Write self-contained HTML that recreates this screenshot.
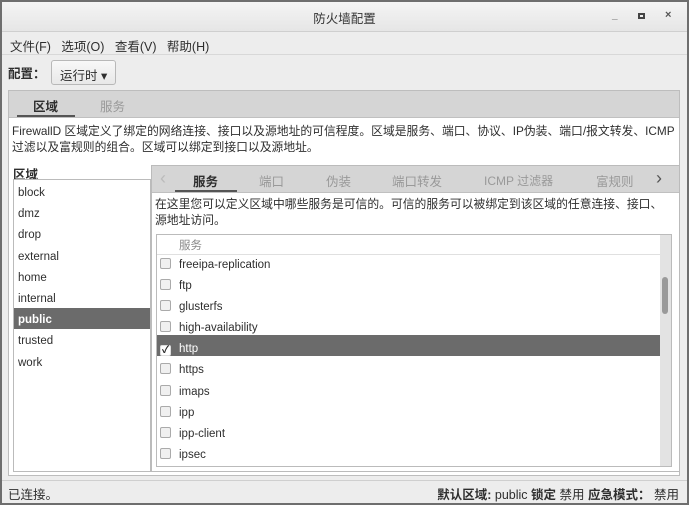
<!DOCTYPE html>
<html><head><meta charset="utf-8"><style>
*{margin:0;padding:0;box-sizing:border-box}
body{width:689px;height:505px;overflow:hidden;background:#fff;font-family:"Liberation Sans","Noto Sans CJK SC",sans-serif;font-size:11px;color:#2e2e2e;position:relative}
.a{position:absolute;white-space:nowrap}
#win{position:absolute;left:0;top:0;width:689px;height:505px;border:2px solid #6e6e6e;background:#ededed}
.cb{display:inline-block;width:11px;height:11px;border:1px solid #aaa;border-radius:2px;background:#f0f0f0;vertical-align:-1px;margin-right:8px}
</style></head><body>
<div id="win"></div>
<div class="a" style="left:2px;top:2px;width:685px;height:30px;background:linear-gradient(#f4f4f4,#e6e6e6);border-bottom:1px solid #cfcfcf"></div>
<div class="a" style="left:0;width:689px;top:8px;text-align:center;font-size:12.5px;color:#333">防火墙配置</div>
<div class="a" style="left:612px;top:10px;font-size:10px;font-weight:bold;color:#555">_</div>
<div class="a" style="left:638px;top:13px;width:7px;height:6px;border:2px solid #444"></div>
<div class="a" style="left:665px;top:9px;font-size:11px;font-weight:bold;color:#555">×</div>
<div class="a" style="left:10px;top:36px;font-size:12.5px">文件(F)&nbsp;&nbsp; 选项(O)&nbsp;&nbsp; 查看(V)&nbsp;&nbsp; 帮助(H)</div>
<div class="a" style="left:2px;top:54px;width:685px;height:1px;background:#d8d8d8"></div>
<div class="a" style="left:8px;top:63px;font-weight:bold;font-size:12.5px">配置：</div>
<div class="a" style="left:51px;top:60px;width:65px;height:25px;border:1px solid #b8b8b8;border-radius:3px;background:linear-gradient(#f8f8f8,#e8e8e8);padding:4px 0 0 8px;font-size:12.5px">运行时 ▾</div>
<div class="a" style="left:8px;top:90px;width:672px;height:386px;border:1px solid #bdbdbd;background:#fff"></div>
<div class="a" style="left:9px;top:91px;width:670px;height:27px;background:#d5d5d5;border-bottom:1px solid #c0c0c0"></div>
<div class="a" style="left:33px;top:96px;font-weight:bold;font-size:12.5px">区域</div>
<div class="a" style="left:17px;top:115px;width:58px;height:2px;background:#555"></div>
<div class="a" style="left:100px;top:96px;font-size:12.5px;color:#999">服务</div>
<div class="a" style="left:12px;top:123px;font-size:11.8px;line-height:16px">FirewallD 区域定义了绑定的网络连接、接口以及源地址的可信程度。区域是服务、端口、协议、IP伪装、端口/报文转发、ICMP<br>过滤以及富规则的组合。区域可以绑定到接口以及源地址。</div>
<div class="a" style="left:13px;top:164px;font-weight:bold;font-size:12.5px">区域</div>
<div class="a" style="left:13px;top:179px;width:138px;height:293px;border:1px solid #bbb;background:#fff"></div>
<div class="a" style="left:14px;top:308px;width:136px;height:21px;background:#6b6b6b"></div>
<div class="a" style="left:18px;top:183px;line-height:21.2px;font-size:11.5px">block<br>dmz<br>drop<br>external<br>home<br>internal<br><b style="color:#fff">public</b><br>trusted<br>work</div>
<div class="a" style="left:151px;top:165px;width:529px;height:307px;border:1px solid #bbb;background:#fff"></div>
<div class="a" style="left:152px;top:166px;width:527px;height:27px;background:#d5d5d5;border-bottom:1px solid #c0c0c0"></div>
<div class="a" style="left:160px;top:168px;font-size:18px;color:#bbb">‹</div>
<div class="a" style="left:656px;top:168px;font-size:18px;color:#555">›</div>
<div class="a" style="left:193px;top:171px;font-weight:bold;font-size:12.5px">服务</div>
<div class="a" style="left:175px;top:190px;width:62px;height:2px;background:#555"></div>
<div class="a" style="left:259px;top:171px;font-size:12.5px;color:#999">端口</div>
<div class="a" style="left:326px;top:171px;font-size:12.5px;color:#999">伪装</div>
<div class="a" style="left:392px;top:171px;font-size:12.5px;color:#999">端口转发</div>
<div class="a" style="left:484px;top:172px;font-size:12px;color:#999">ICMP 过滤器</div>
<div class="a" style="left:596px;top:171px;font-size:12.5px;color:#999">富规则</div>
<div class="a" style="left:155px;top:196px;font-size:11.8px;line-height:16px">在这里您可以定义区域中哪些服务是可信的。可信的服务可以被绑定到该区域的任意连接、接口、<br>源地址访问。</div>
<div class="a" style="left:156px;top:234px;width:516px;height:233px;border:1px solid #bbb;background:#fff;overflow:hidden">
<div class="a" style="left:0;top:0;width:503px;height:20px;border-bottom:1px solid #e0e0e0"></div>
<div class="a" style="left:22px;top:2px;color:#888;font-size:11.5px">服务</div>
<div class="a" style="left:503px;top:0;width:12px;height:233px;background:#e3e3e3"></div>
<div class="a" style="left:505px;top:42px;width:6px;height:37px;background:#9a9a9a;border-radius:3px"></div>
<div class="a" style="left:0;top:100px;width:503px;height:21px;background:#6b6b6b"></div>
<div style="position:absolute;left:3px;top:20px;font-size:11.5px;line-height:21.1px">
<div><span class="cb"></span>freeipa-replication</div>
<div><span class="cb"></span>ftp</div>
<div><span class="cb"></span>glusterfs</div>
<div><span class="cb"></span>high-availability</div>
<div style="color:#fff"><span class="cb" style="border-color:#ddd;background:#fff;color:#222;font-size:10px;line-height:9px;text-align:center;font-weight:bold">✓</span>http</div>
<div><span class="cb"></span>https</div>
<div><span class="cb"></span>imaps</div>
<div><span class="cb"></span>ipp</div>
<div><span class="cb"></span>ipp-client</div>
<div><span class="cb"></span>ipsec</div>
<div><span class="cb"></span>ipv6</div>
</div>
</div>
<div class="a" style="left:2px;top:480px;width:685px;height:1px;background:#cfcfcf"></div>
<div class="a" style="left:8px;top:484px;font-size:12.5px">已连接。</div>
<div class="a" style="right:10px;top:484px;font-size:12.5px"><b>默认区域:</b> public <b>锁定</b> 禁用 <b>应急模式：</b> 禁用</div>
</body></html>
